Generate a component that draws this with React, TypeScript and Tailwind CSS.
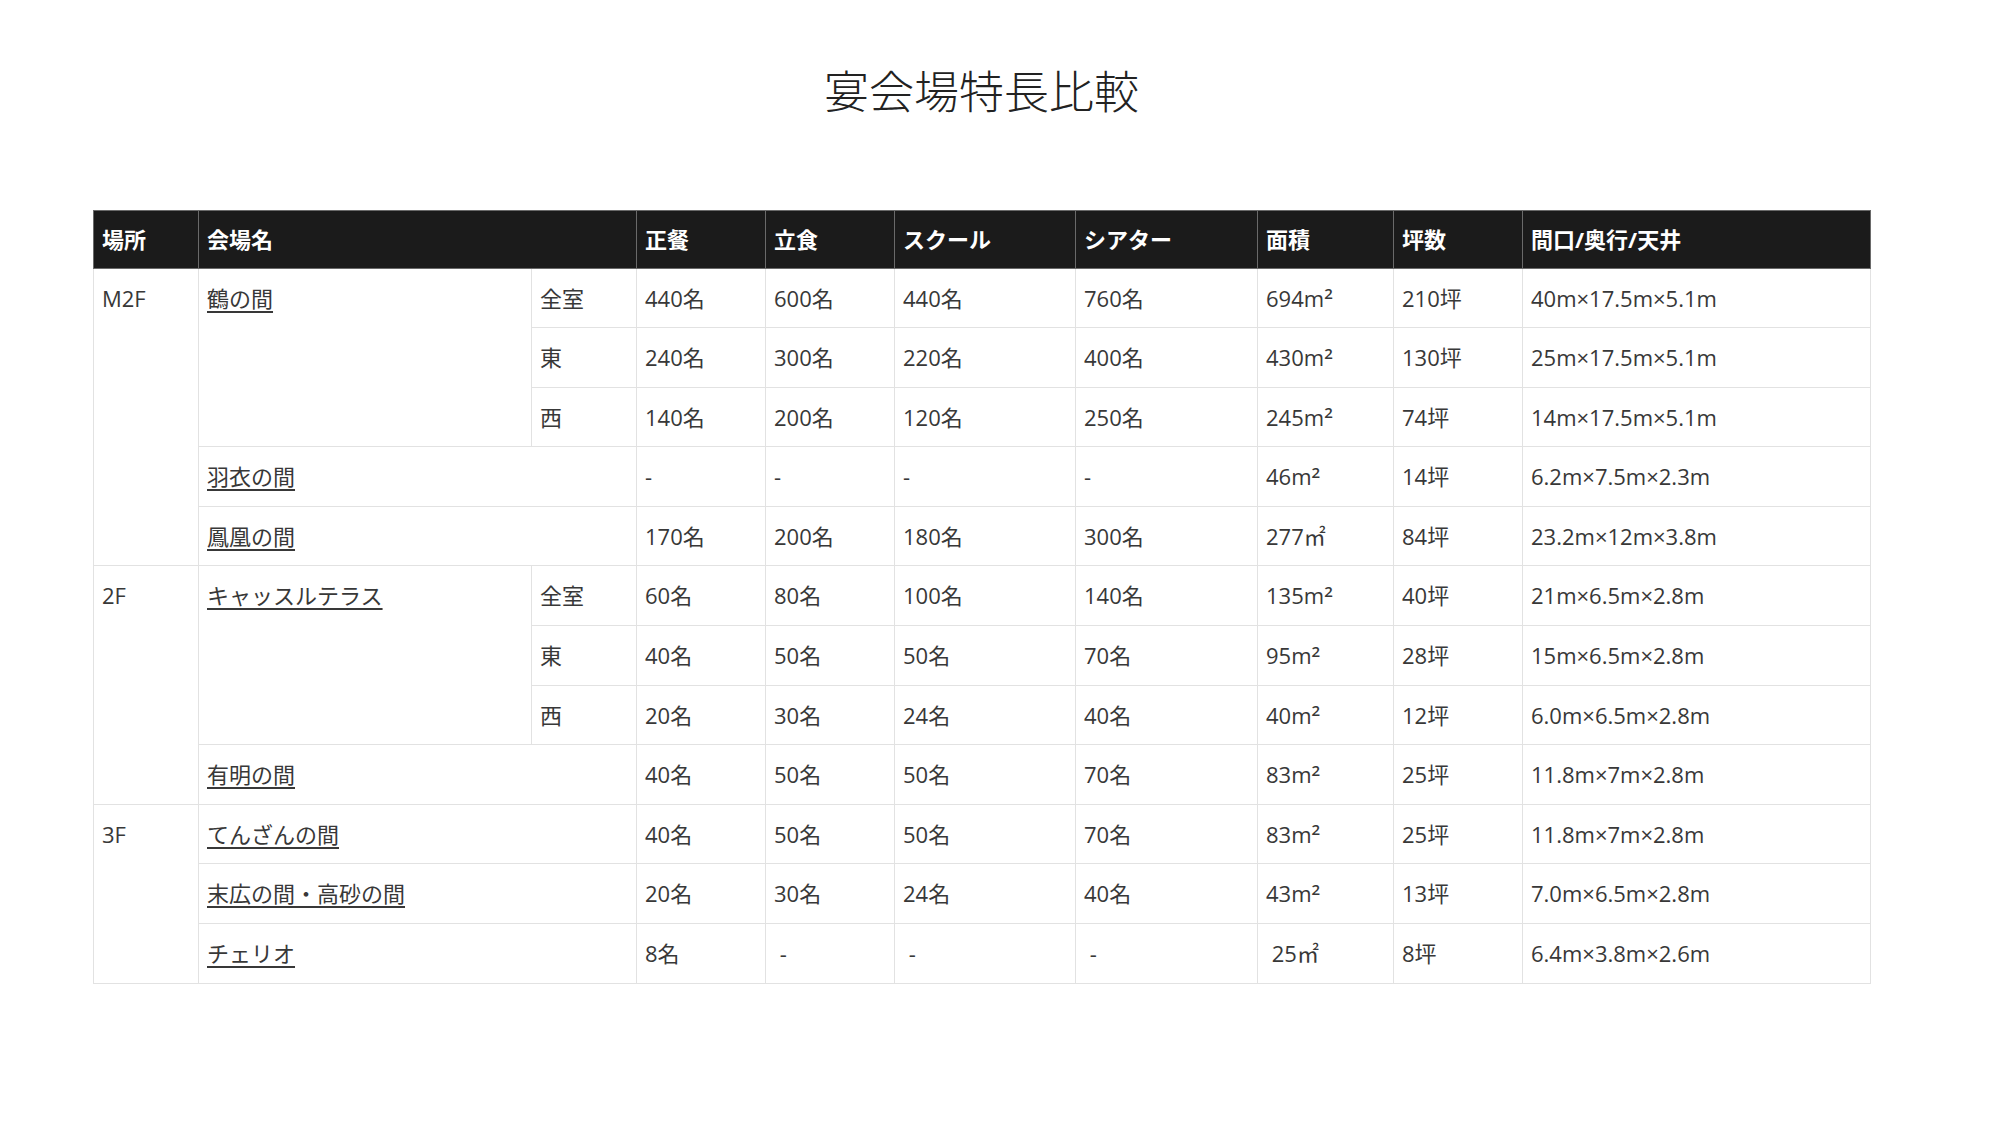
import React from "react";

type Cell = {
  text: React.ReactNode;
  rowSpan?: number;
  colSpan?: number;
  link?: boolean;
};

const m2 = (n: string) => (
  <>
    {n}m<sup className="text-[15px] font-semibold">2</sup>
  </>
);

const rows: Cell[][] = [
  [
    { text: "M2F", rowSpan: 5 },
    { text: "鶴の間", rowSpan: 3, link: true },
    { text: "全室" },
    { text: "440名" },
    { text: "600名" },
    { text: "440名" },
    { text: "760名" },
    { text: m2("694") },
    { text: "210坪" },
    { text: "40m×17.5m×5.1m" },
  ],
  [
    { text: "東" },
    { text: "240名" },
    { text: "300名" },
    { text: "220名" },
    { text: "400名" },
    { text: m2("430") },
    { text: "130坪" },
    { text: "25m×17.5m×5.1m" },
  ],
  [
    { text: "西" },
    { text: "140名" },
    { text: "200名" },
    { text: "120名" },
    { text: "250名" },
    { text: m2("245") },
    { text: "74坪" },
    { text: "14m×17.5m×5.1m" },
  ],
  [
    { text: "羽衣の間", colSpan: 2, link: true },
    { text: "-" },
    { text: "-" },
    { text: "-" },
    { text: "-" },
    { text: m2("46") },
    { text: "14坪" },
    { text: "6.2m×7.5m×2.3m" },
  ],
  [
    { text: "鳳凰の間", colSpan: 2, link: true },
    { text: "170名" },
    { text: "200名" },
    { text: "180名" },
    { text: "300名" },
    { text: "277㎡" },
    { text: "84坪" },
    { text: "23.2m×12m×3.8m" },
  ],
  [
    { text: "2F", rowSpan: 4 },
    { text: "キャッスルテラス", rowSpan: 3, link: true },
    { text: "全室" },
    { text: "60名" },
    { text: "80名" },
    { text: "100名" },
    { text: "140名" },
    { text: m2("135") },
    { text: "40坪" },
    { text: "21m×6.5m×2.8m" },
  ],
  [
    { text: "東" },
    { text: "40名" },
    { text: "50名" },
    { text: "50名" },
    { text: "70名" },
    { text: m2("95") },
    { text: "28坪" },
    { text: "15m×6.5m×2.8m" },
  ],
  [
    { text: "西" },
    { text: "20名" },
    { text: "30名" },
    { text: "24名" },
    { text: "40名" },
    { text: m2("40") },
    { text: "12坪" },
    { text: "6.0m×6.5m×2.8m" },
  ],
  [
    { text: "有明の間", colSpan: 2, link: true },
    { text: "40名" },
    { text: "50名" },
    { text: "50名" },
    { text: "70名" },
    { text: m2("83") },
    { text: "25坪" },
    { text: "11.8m×7m×2.8m" },
  ],
  [
    { text: "3F", rowSpan: 3 },
    { text: "てんざんの間", colSpan: 2, link: true },
    { text: "40名" },
    { text: "50名" },
    { text: "50名" },
    { text: "70名" },
    { text: m2("83") },
    { text: "25坪" },
    { text: "11.8m×7m×2.8m" },
  ],
  [
    { text: "末広の間・高砂の間", colSpan: 2, link: true },
    { text: "20名" },
    { text: "30名" },
    { text: "24名" },
    { text: "40名" },
    { text: m2("43") },
    { text: "13坪" },
    { text: "7.0m×6.5m×2.8m" },
  ],
  [
    { text: "チェリオ", colSpan: 2, link: true },
    { text: "8名" },
    { text: "\u00a0-" },
    { text: "\u00a0-" },
    { text: "\u00a0-" },
    { text: "\u00a025㎡" },
    { text: "8坪" },
    { text: "6.4m×3.8m×2.6m" },
  ],
];

const headers: { label: string; colSpan?: number }[] = [
  { label: "場所" },
  { label: "会場名", colSpan: 2 },
  { label: "正餐" },
  { label: "立食" },
  { label: "スクール" },
  { label: "シアター" },
  { label: "面積" },
  { label: "坪数" },
  { label: "間口/奥行/天井" },
];

export default function App() {
  return (
    <div
      className="min-h-screen bg-white pt-[62px] text-[#383838]"
      style={{ fontFamily: '"Open Sans", "Noto Sans CJK JP", sans-serif' }}
    >
      <div className="ml-[93px] w-[1777px]">
        <h1
          className="text-center text-[45px] font-light leading-[56px] text-[#222]"
          style={{ fontFamily: '"Noto Sans CJK JP", serif' }}
        >
          宴会場特長比較
        </h1>

        <table className="mt-[92px] w-[1777px] table-fixed border-collapse text-[22px]">
          <colgroup>
            <col className="w-[105px]" />
            <col className="w-[333px]" />
            <col className="w-[105px]" />
            <col className="w-[129px]" />
            <col className="w-[129px]" />
            <col className="w-[181px]" />
            <col className="w-[182px]" />
            <col className="w-[136px]" />
            <col className="w-[129px]" />
            <col className="w-[348px]" />
          </colgroup>
          <thead>
            <tr className="h-[57.5px] bg-[#1b1b1b]">
              {headers.map((h) => (
                <th
                  key={h.label}
                  colSpan={h.colSpan}
                  className="border border-[#6a6a6a] px-[8px] text-left align-middle font-bold text-white"
                >
                  {h.label}
                </th>
              ))}
            </tr>
          </thead>
          <tbody>
            {rows.map((row, i) => (
              <tr key={i} className="h-[59.6px]">
                {row.map((c, j) => (
                  <td
                    key={j}
                    rowSpan={c.rowSpan}
                    colSpan={c.colSpan}
                    className="whitespace-pre border border-[#e2e2e2] px-[8px] pt-[12px] pb-0 align-top leading-[34px]"
                  >
                    {c.link ? (
                      <a href="#" className="text-[#383838] underline underline-offset-[4px]">
                        {c.text}
                      </a>
                    ) : (
                      c.text
                    )}
                  </td>
                ))}
              </tr>
            ))}
          </tbody>
        </table>
      </div>
    </div>
  );
}
